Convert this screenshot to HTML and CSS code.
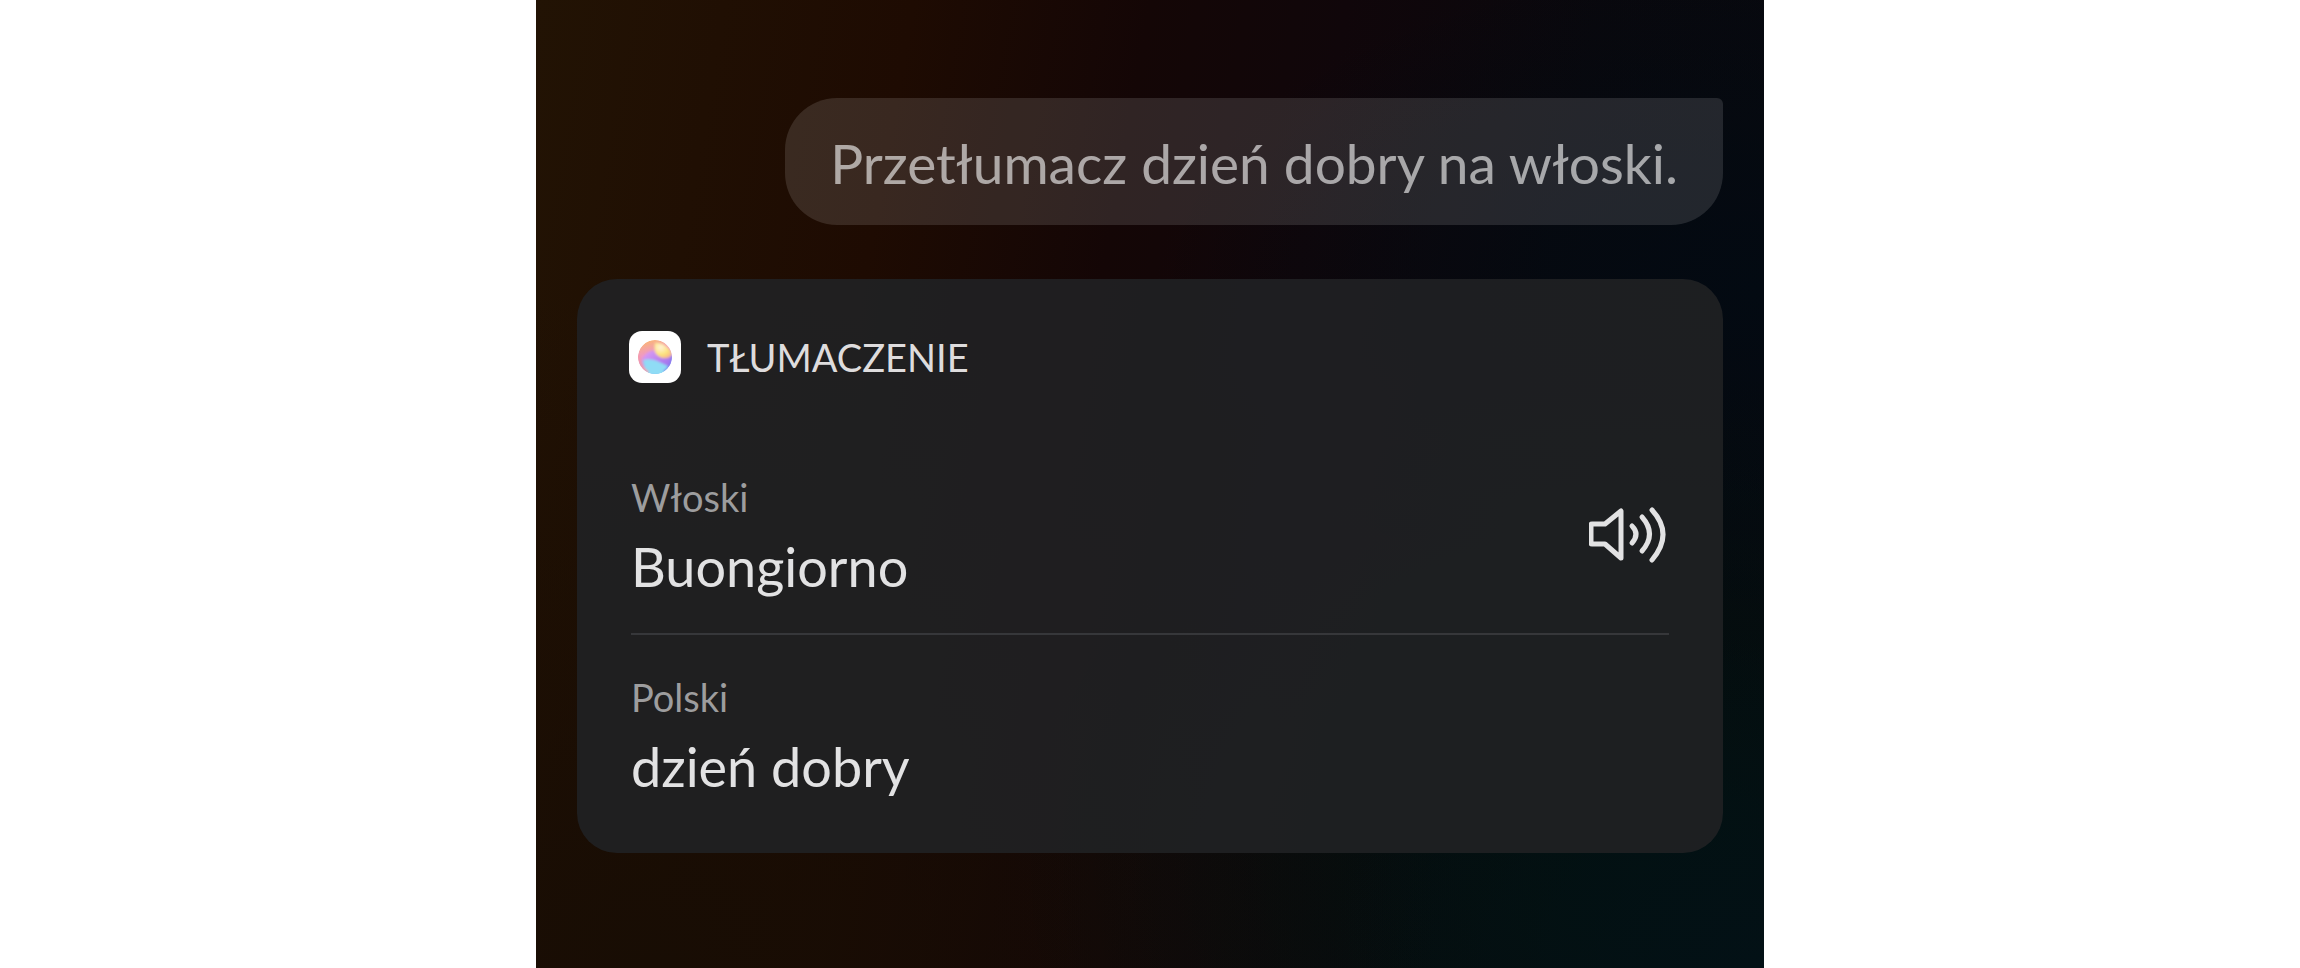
FILE: index.html
```html
<!DOCTYPE html>
<html lang="pl">
<head>
    <meta charset="UTF-8">
    <meta name="viewport" content="width=device-width, initial-scale=1.0">
    <title>Tłumaczenie</title>
    <link rel="stylesheet" href="styles.css">
</head>
<body>

    <main class="assistant">
        <p class="query">Przetłumacz dzień dobry na włoski.</p>

        <section class="card" aria-labelledby="card-title">
            <header class="card-header">
                <svg class="app-icon" viewBox="0 0 52 52" aria-hidden="true">
                    <defs>
                        <linearGradient id="orb" x1="0.3" y1="0" x2="0.6" y2="1">
                            <stop offset="0" stop-color="#fbb673"/>
                            <stop offset="0.4" stop-color="#ef98c8"/>
                            <stop offset="0.65" stop-color="#b79cf5"/>
                            <stop offset="1" stop-color="#62b4ee"/>
                        </linearGradient>
                        <linearGradient id="orb-wave" x1="0" y1="0" x2="1" y2="0.6">
                            <stop offset="0" stop-color="#e0a0f4"/>
                            <stop offset="1" stop-color="#a274ee"/>
                        </linearGradient>
                        <radialGradient id="orb-light" cx="0.35" cy="0.3" r="0.8">
                            <stop offset="0" stop-color="#fff3d8"/>
                            <stop offset="0.6" stop-color="#fce27c"/>
                            <stop offset="1" stop-color="#f7b08c"/>
                        </radialGradient>
                        <filter id="soft" x="-20%" y="-20%" width="140%" height="140%">
                            <feGaussianBlur stdDeviation="1"/>
                        </filter>
                        <clipPath id="orb-clip">
                            <circle cx="26" cy="26" r="17"/>
                        </clipPath>
                    </defs>
                    <path d="M26 0C46 0 52 3 52 26S46 52 26 52 0 49 0 26 6 0 26 0z" fill="#fff"/>
                    <rect width="52" height="52" rx="13" fill="#fff"/>
                    <g clip-path="url(#orb-clip)">
                        <circle cx="26" cy="26" r="17" fill="url(#orb)"/>
                        <g filter="url(#soft)">
                            <path d="M14 30C18 25 27 29 40 36L34 44H18z" fill="#8fdcf5"/>
                            <path d="M14 27C17 22 22 19 25 20 28 27 35 28 44 25L42 36C32 32 24 26 14 29z" fill="url(#orb-wave)"/>
                            <path d="M26 12C24 19 27 25 33 27 39 28 42 26 43 23 40 16 33 11 26 12z" fill="url(#orb-light)"/>
                            <path d="M9 24C10 32 13 38 19 42" fill="none" stroke="#f59aa6" stroke-width="3"/>
                            <path d="M43 25C43 31 40 37 35 41" fill="none" stroke="#7f7dee" stroke-width="2"/>
                        </g>
                    </g>
                </svg>
                <h1 class="card-title" id="card-title">TŁUMACZENIE</h1>
            </header>

            <div class="entry">
                <div class="entry-text">
                    <p class="language">Włoski</p>
                    <p class="phrase" lang="it">Buongiorno</p>
                </div>
                <button class="play" type="button" aria-label="Odtwórz wymowę">
                    <svg viewBox="2 2 80 60" aria-hidden="true">
                        <path d="M4 20Q4 19 5 19H18L34 6V53L18 39H5Q4 39 4 38z"/>
                        <path d="M45 21Q53 29 45 38"/>
                        <path d="M55 12Q70 29 55 46"/>
                        <path d="M65 5Q87 29 65 55"/>
                    </svg>
                </button>
            </div>

            <div class="entry">
                <div class="entry-text">
                    <p class="language">Polski</p>
                    <p class="phrase">dzień dobry</p>
                </div>
            </div>
        </section>
    </main>

</body>
</html>
```
FILE: styles.css
```css
* {
    box-sizing: border-box;
}

body {
    margin: 0;
    background-color: #fff;
    font-family: Lato, "Noto Sans", sans-serif;
}

h1, p {
    margin: 0;
    font-weight: 400;
}

.assistant {
    display: flex;
    flex-direction: column;
    gap: 54px;
    max-width: 1228px;
    min-height: 100vh;
    margin: 0 auto;
    padding: 98px 41px;
    background:
        radial-gradient(ellipse at 100% 100%, #031116 0%, rgba(3, 17, 22, 0) 25%),
        radial-gradient(ellipse at 90% 90%, #02110f 0%, rgba(2, 17, 15, 0) 40%),
        radial-gradient(ellipse at 100% 30%, #030a12 0%, rgba(3, 10, 18, 0) 35%),
        radial-gradient(ellipse at 10% 100%, #180d04 0%, rgba(24, 13, 4, 0) 50%),
        linear-gradient(100deg, #221304 0%, #1e0b02 27%, #140606 44%, #10060a 58%, #09080d 76%, #06090f 100%);
}

/* dymek z pytaniem */
.query {
    align-self: flex-end;
    padding: 29px 45px 26px;
    border-radius: 52px 6px 52px 52px;
    background-color: rgba(255, 255, 255, 0.12);
    color: rgba(255, 255, 255, 0.6);
    font-size: 55px;
    line-height: 72px;
}

/* karta z wynikiem */
.card {
    padding: 52px 52px 20px;
    border-radius: 40px;
    background-color: rgba(32, 33, 36, 0.9);
}

.card-header {
    display: flex;
    align-items: center;
    gap: 26px;
    margin-bottom: 52px;
}

.app-icon {
    width: 52px;
    height: 52px;
}

.card-title {
    color: #dedcdd;
    font-size: 38px;
    line-height: 52px;
}

.entry {
    display: flex;
    align-items: center;
    justify-content: space-between;
    margin: 0 2px;
    padding: 32px 0 26px;
}

.entry + .entry {
    border-top: 2px solid #36373a;
}

.language {
    color: #9d9d9e;
    font-size: 38px;
    line-height: 60px;
}

.phrase {
    color: #e2e2e3;
    font-size: 54px;
    line-height: 80px;
}

.play {
    padding: 0;
    border: none;
    background: none;
    color: #e2e2e3;
    cursor: pointer;
}

.play svg {
    display: block;
    width: 80px;
    height: 60px;
    fill: none;
    stroke: currentColor;
    stroke-width: 5;
    stroke-linecap: round;
    stroke-linejoin: round;
}
```
